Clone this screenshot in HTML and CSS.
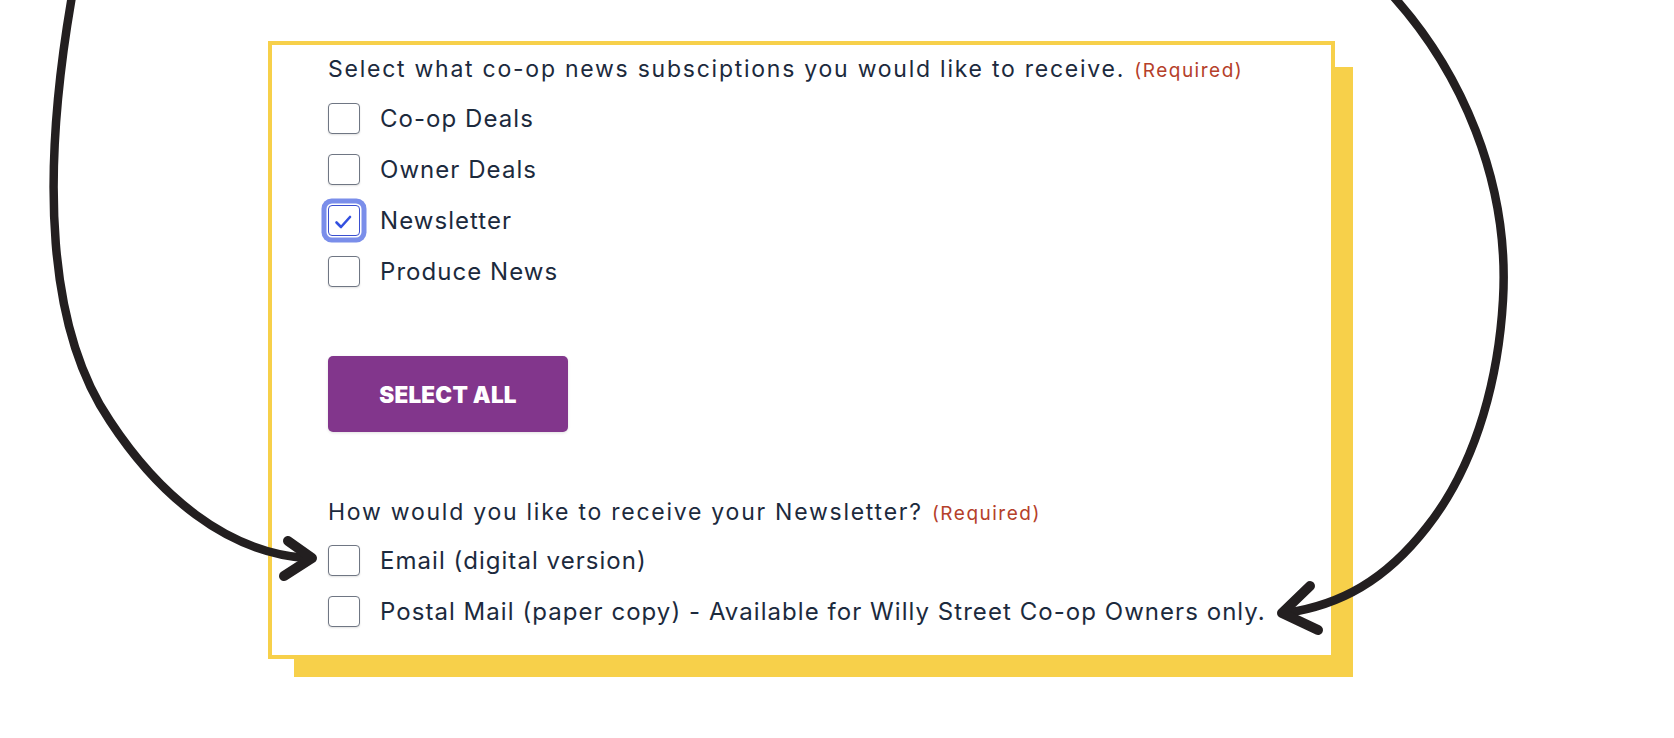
FILE: index.html
```html
<!DOCTYPE html>
<html lang="en">
<head>
<meta charset="utf-8">
<title>Newsletter subscriptions</title>
<link rel="stylesheet" href="styles.css">
</head>
<body>
<div class="stage">
  <form class="card">
    <div class="group">
      <p class="question">Select what co-op news subsciptions you would like to receive. <span class="req">(Required)</span></p>
      <div class="opts">
        <label class="opt"><span class="box"></span><span class="txt">Co-op Deals</span></label>
        <label class="opt"><span class="box"></span><span class="txt">Owner Deals</span></label>
        <label class="opt"><span class="box is-checked"><svg viewBox="0 0 32 32" width="32" height="32"><path d="M8.5 17.5 L13 22 L22 12" fill="none" stroke="#3350e0" stroke-width="2.6" stroke-linecap="round" stroke-linejoin="round"/></svg></span><span class="txt">Newsletter</span></label>
        <label class="opt"><span class="box"></span><span class="txt">Produce News</span></label>
      </div>
    </div>
    <button type="button" class="btn">SELECT ALL</button>
    <div class="group group-2">
      <p class="question">How would you like to receive your Newsletter? <span class="req">(Required)</span></p>
      <div class="opts">
        <label class="opt"><span class="box"></span><span class="txt">Email (digital version)</span></label>
        <label class="opt"><span class="box"></span><span class="txt">Postal Mail (paper copy) - Available for Willy Street Co-op Owners only.</span></label>
      </div>
    </div>
  </form>
  <svg class="arrows" width="1674" height="738" viewBox="0 0 1674 738">
    <g fill="none" stroke="#231f20" stroke-width="8.5" stroke-linecap="round" stroke-linejoin="round">
      <path d="M72 -4 C 40 180, 48 330, 110 421 C 158 494, 225 552, 306 558"/>
      <path d="M288 541 L312 558 L284 576" stroke-width="10"/>
      <path d="M1392 -5 C 1460 70, 1510 180, 1503 300 C 1499 370, 1480 460, 1427 527 C 1385 581, 1340 605, 1286 613"/>
      <path d="M1310 586 L1282 613 L1318 630" stroke-width="10"/>
    </g>
  </svg>
</div>
</body>
</html>
```
FILE: styles.css
```css
html, body {
  margin: 0;
  padding: 0;
  background: #ffffff;
}

.stage {
  position: relative;
  width: 1674px;
  height: 738px;
  overflow: hidden;
  box-sizing: border-box;
  padding: 41px 0 0 268px;
  font-family: "Inter", "Liberation Sans", sans-serif;
  color: #1c2a3d;
}

.card {
  box-sizing: border-box;
  width: 1067px;
  height: 618px;
  margin: 0;
  border: 4px solid #f7d04a;
  background: #ffffff;
  box-shadow: 22px 22px 0 -4px #f7d04a;
  padding: 9px 0 0 56px;
  display: flex;
  flex-direction: column;
  align-items: flex-start;
}

.question {
  margin: 0;
  font-size: 23px;
  line-height: 30px;
  letter-spacing: 1.75px;
  white-space: nowrap;
}

.req {
  color: #b5402a;
  font-size: 19px;
  margin-left: 1px;
  letter-spacing: 1.5px;
}

.opts {
  display: flex;
  flex-direction: column;
  gap: 20px;
  margin-top: 17px;
}

.group-2 .opts {
  margin-top: 16px;
}

.opt {
  display: flex;
  align-items: center;
  gap: 20px;
  height: 31px;
  font-size: 24px;
  letter-spacing: 1.05px;
  white-space: nowrap;
}

.box {
  box-sizing: border-box;
  width: 32px;
  height: 31px;
  border: 1.5px solid #6f7683;
  border-radius: 4px;
  background: #fff;
  box-shadow: 0 1px 2px rgba(0, 0, 0, 0.12);
  display: flex;
  align-items: center;
  justify-content: center;
  flex: none;
}

.box svg {
  display: block;
  flex: none;
}

.box.is-checked {
  border-color: #3a4fcf;
  box-shadow: 0 0 0 1.5px #ffffff, 0 0 0 6.5px #7a8eea;
  border-radius: 4px;
}

.btn {
  margin-top: 69px;
  width: 240px;
  height: 76px;
  border: 0;
  border-radius: 5px;
  background: #82368c;
  color: #ffffff;
  font-family: "Inter", "Liberation Sans", sans-serif;
  font-weight: 900;
  font-size: 22.5px;
  letter-spacing: 0.01em;
  box-shadow: 0 1px 3px rgba(0, 0, 0, 0.12);
  padding: 0;
}

.group-2 {
  margin-top: 65px;
}

.arrows {
  position: absolute;
  left: 0;
  top: 0;
  pointer-events: none;
}
```
